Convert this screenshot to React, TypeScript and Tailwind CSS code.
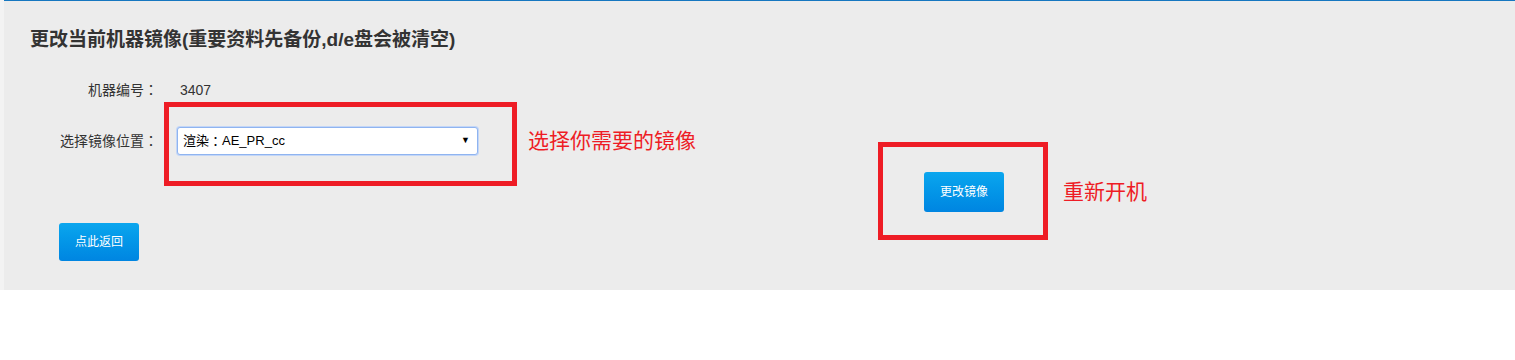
import React from "react";

const FONT = { fontFamily: '"Liberation Sans", "Noto Sans CJK SC", sans-serif' };
const COLON = { fontFamily: '"Noto Sans CJK TC", sans-serif' };

export default function App() {
  return (
    <div className="w-[1515px] h-[360px] bg-white" style={FONT}>
      <div className="flex h-[290px]">
        <div className="w-[4px] bg-[#f3f3f3]" />
        <div className="flex-1 bg-[#ececec] border-t border-[#1677c0] pl-[26px] pt-[27px]">
          <h1 className="text-[19px] leading-[24px] font-bold text-[#333]">
            更改当前机器镜像(重要资料先备份,d/e盘会被清空)
          </h1>

          <div className="mt-[28px] flex items-center h-[20px] text-[14px] text-[#333]">
            <div className="w-[128px] text-right">
              机器编号<span style={COLON}>：</span>
            </div>
            <div className="ml-[22px]">3407</div>
          </div>

          <div className="mt-[27px] flex items-center h-[28px] text-[14px] text-[#333]">
            <div className="w-[128px] text-right">
              选择镜像位置<span style={COLON}>：</span>
            </div>
            <div className="relative ml-[19px] w-[301px] h-[28px]">
              <div className="w-full h-full bg-white border border-[#8fb4f0] rounded-[3px] pl-[5px] flex items-center text-[13px] text-black shadow-[0_0_0_1px_#c3d6f7]">
                渲染<span style={COLON}>：</span>AE_PR_cc
              </div>
              <span className="pointer-events-none absolute right-[8px] top-1/2 -translate-y-1/2 text-[9px] text-black">▼</span>
              <div className="pointer-events-none absolute -left-[13px] -top-[25px] -right-[39px] -bottom-[31px] border-[5px] border-[#ee1c25]" />
              <span className="absolute left-[351px] top-1/2 -translate-y-1/2 whitespace-nowrap text-[21px] text-[#ee1c25]">
                选择你需要的镜像
              </span>
            </div>
          </div>

          <div className="mt-[17px] flex">
            <div className="relative ml-[894px]">
              <button className="w-[80px] h-[40px] rounded-[3px] bg-gradient-to-b from-[#0ba6ee] to-[#0085e1] text-white text-[12px]">
                更改镜像
              </button>
              <div className="pointer-events-none absolute -left-[46px] -top-[30px] -right-[44px] -bottom-[28px] border-[5px] border-[#ee1c25]" />
              <span className="absolute left-[139px] top-1/2 -translate-y-1/2 whitespace-nowrap text-[21px] text-[#ee1c25]">
                重新开机
              </span>
            </div>
          </div>

          <div className="mt-[11px] ml-[29px]">
            <button className="w-[80px] h-[38px] rounded-[3px] bg-gradient-to-b from-[#0ba6ee] to-[#0085e1] text-white text-[12px]">
              点此返回
            </button>
          </div>
        </div>
      </div>
    </div>
  );
}
